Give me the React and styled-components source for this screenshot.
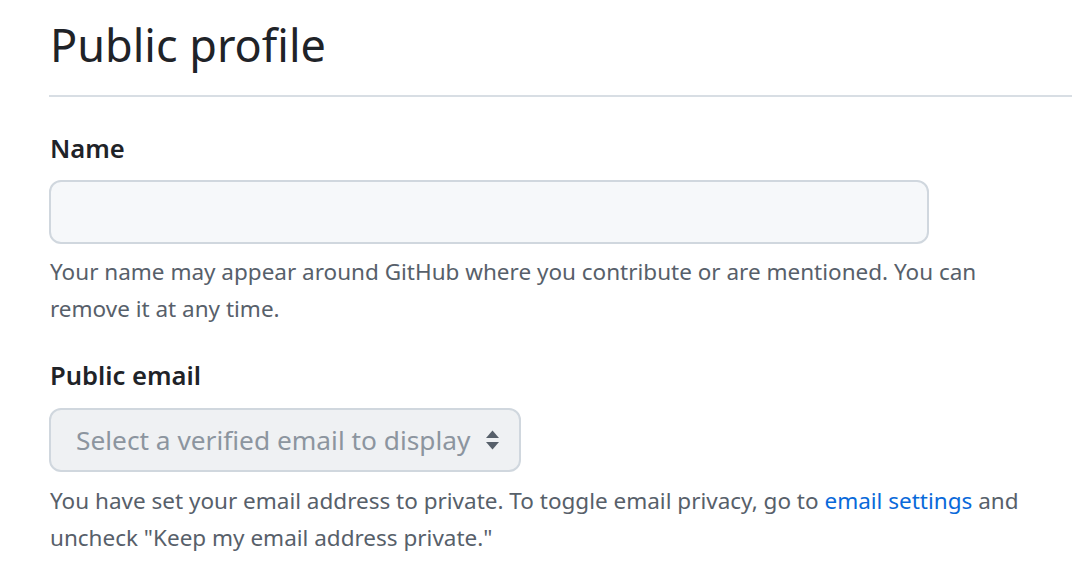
import styled, { createGlobalStyle } from 'styled-components';

const GlobalStyle = createGlobalStyle`
  body {
    margin: 0;
    background: #ffffff;
    font-family: "Noto Sans", "Open Sans", sans-serif;
  }
`;

const Page = styled.div`
  padding: 16px 0 0 50px;
  overflow: hidden;
`;

const Header = styled.div`
  padding-bottom: 21px;
  border-bottom: 2px solid #d8dee4;
  margin-left: -1px;
  padding-left: 1px;
`;

const Title = styled.h1`
  margin: 0;
  color: #1f2328;
  font-size: 45px;
  font-weight: 400;
  line-height: 58px;
`;

const Form = styled.form`
  display: flex;
  flex-direction: column;
  width: 1000px;
  padding-top: 34px;
`;

const Group = styled.div`
  display: flex;
  flex-direction: column;
  margin-bottom: ${(p) => p.$gap || 0}px;
`;

const Label = styled.label`
  color: #1f2328;
  font-size: 25.6px;
  font-weight: 600;
  line-height: 36px;
  margin-bottom: ${(p) => p.$gap || 13}px;
`;

const Input = styled.input`
  box-sizing: border-box;
  width: 880px;
  height: 64px;
  margin-left: -1px;
  border: 2px solid #d0d7de;
  border-radius: 12px;
  background: #f6f8fa;
  font: inherit;
  outline: none;
`;

const SelectBox = styled.div`
  box-sizing: border-box;
  display: flex;
  align-items: center;
  justify-content: space-between;
  width: 472px;
  height: 64px;
  margin-left: -1px;
  padding: 0 19px 0 25px;
  border: 2px solid #d0d7de;
  border-radius: 12px;
  background: #eff1f3;
  color: #8c959f;
  font-size: 26.3px;
`;

const Note = styled.p`
  margin: ${(p) => p.$top || 10}px 0 0;
  color: #57606a;
  font-size: 22.5px;
  line-height: 36.5px;
`;

const Link = styled.a`
  color: #0969da;
  text-decoration: none;
`;

function SortIcon() {
  return (
    <svg width="15" height="22" viewBox="0 0 15 22" fill="#57606a">
      <path d="M7.5 1.5 L14 9 L1 9 Z" />
      <path d="M7.5 20.5 L14 13 L1 13 Z" />
    </svg>
  );
}

export default function App() {
  return (
    <>
      <GlobalStyle />
      <Page>
        <Header>
          <Title>Public profile</Title>
        </Header>
        <Form onSubmit={(e) => e.preventDefault()}>
          <Group $gap={31}>
            <Label htmlFor="name">Name</Label>
            <Input id="name" type="text" />
            <Note>
              Your name may appear around GitHub where you contribute or are
              mentioned. You can remove it at any time.
            </Note>
          </Group>
          <Group>
            <Label $gap={14}>Public email</Label>
            <SelectBox>
              <span>Select a verified email to display</span>
              <SortIcon />
            </SelectBox>
            <Note $top={11}>
              You have set your email address to private. To toggle email
              privacy, go to <Link href="#">email settings</Link> and uncheck
              "Keep my email address private."
            </Note>
          </Group>
        </Form>
      </Page>
    </>
  );
}
